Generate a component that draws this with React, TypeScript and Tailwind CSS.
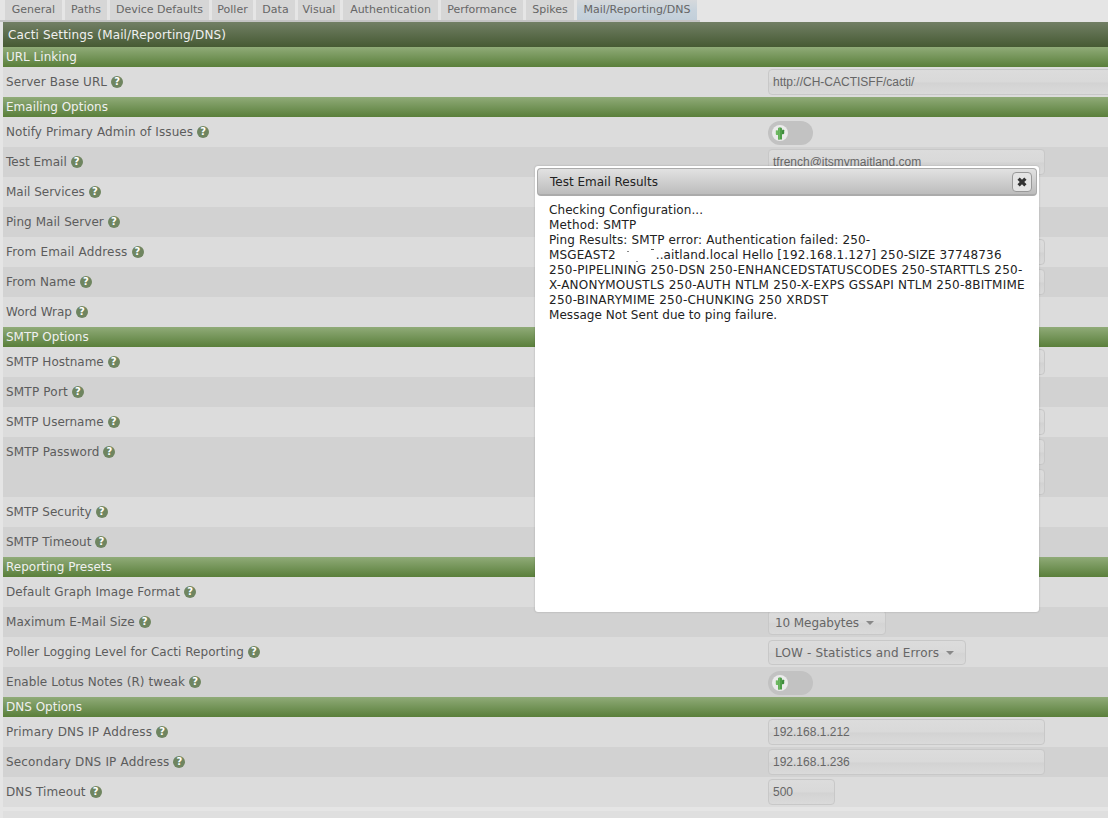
import React from "react";

const tabs = [
  { t: "General", w: "w-[57px]" },
  { t: "Paths", w: "w-[42px]" },
  { t: "Device Defaults", w: "w-[99px]" },
  { t: "Poller", w: "w-[41px]" },
  { t: "Data", w: "w-[39px]" },
  { t: "Visual", w: "w-[42px]" },
  { t: "Authentication", w: "w-[95px]" },
  { t: "Performance", w: "w-[82px]" },
  { t: "Spikes", w: "w-[48px]" },
  { t: "Mail/Reporting/DNS", w: "w-[120px]" },
];

type Ctl =
  | { k: "none" }
  | { k: "input"; v?: string; w?: string }
  | { k: "toggle" }
  | { k: "select"; v: string; w: string; tr?: string; m: string };

type Item =
  | { h: string }
  | { l: string; c: Ctl; c2?: Ctl; tall?: boolean; tr?: string };

const none: Ctl = { k: "none" };
const items: Item[] = [
  { h: "URL Linking" },
  { l: "Server Base URL", tr: "tracking-[0.07px]", c: { k: "input", v: "http://CH-CACTISFF/cacti/", w: "w-[400px]" } },
  { h: "Emailing Options" },
  { l: "Notify Primary Admin of Issues", tr: "tracking-[0.1px]", c: { k: "toggle" } },
  { l: "Test Email", c: { k: "input", v: "tfrench@itsmymaitland.com" } },
  { l: "Mail Services", c: none },
  { l: "Ping Mail Server", tr: "tracking-[0.06px]", c: none },
  { l: "From Email Address", tr: "tracking-[0.17px]", c: { k: "input" } },
  { l: "From Name", tr: "tracking-[0.1px]", c: { k: "input" } },
  { l: "Word Wrap", c: none },
  { h: "SMTP Options" },
  { l: "SMTP Hostname", c: { k: "input" } },
  { l: "SMTP Port", tr: "tracking-[0.2px]", c: none },
  { l: "SMTP Username", c: { k: "input" } },
  { l: "SMTP Password", tr: "tracking-[0.08px]", c: { k: "input" }, c2: { k: "input" }, tall: true },
  { l: "SMTP Security", c: none },
  { l: "SMTP Timeout", c: none },
  { h: "Reporting Presets" },
  { l: "Default Graph Image Format", tr: "tracking-[0.08px]", c: none },
  { l: "Maximum E-Mail Size", tr: "tracking-[0.05px]", c: { k: "select", v: "10 Megabytes", w: "w-[118px]", tr: "tracking-[-0.08px]", m: "ml-[7px]" } },
  { l: "Poller Logging Level for Cacti Reporting", tr: "tracking-[0.03px]", c: { k: "select", v: "LOW - Statistics and Errors", w: "w-[198px]", tr: "tracking-[0.15px]", m: "ml-[7px]" } },
  { l: "Enable Lotus Notes (R) tweak", tr: "tracking-[0.07px]", c: { k: "toggle" } },
  { h: "DNS Options" },
  { l: "Primary DNS IP Address", tr: "tracking-[0.18px]", c: { k: "input", v: "192.168.1.212" } },
  { l: "Secondary DNS IP Address", tr: "tracking-[0.17px]", c: { k: "input", v: "192.168.1.236" } },
  { l: "DNS Timeout", tr: "tracking-[0.09px]", c: { k: "input", v: "500", w: "w-[67px]" } },
];

function Help() {
  return (
    <span className="ml-[4px] inline-flex h-[12px] w-[12px] shrink-0 items-center justify-center rounded-full bg-[#6f8560] text-[10px] font-bold leading-none text-white">
      ?
    </span>
  );
}

function Cactus() {
  return (
    <svg width="10" height="13" viewBox="0 0 10 13" className="block">
      <path d="M3 1.2 C3 .2 7 .2 7 1.2 V12.6 H3 Z" fill="#4f9e4a" />
      <path d="M.8 3.8 C.8 3 3 3 3 3.8 V8 H1.8 C1.1 8 .8 7.5 .8 7 Z" fill="#6fb862" />
      <path d="M7 3.2 C7 2.6 9.2 2.6 9.2 3.2 V6 C9.2 6.7 8.8 7.2 8.2 7.2 H7 Z" fill="#3f8c3c" />
      <path d="M3.4 1 H4.8 V12.6 H3.4 Z" fill="#74bd66" />
    </svg>
  );
}

function Control({ c }: { c: Ctl }) {
  if (c.k === "none") return null;
  if (c.k === "toggle")
    return (
      <div className="mt-[2px] flex h-[24px] w-[45px] items-center rounded-full bg-[#c2c2c2] pl-[4px]">
        <div className="flex h-[16px] w-[16px] items-center justify-center rounded-full bg-[#ebebeb]">
          <Cactus />
        </div>
      </div>
    );
  if (c.k === "select")
    return (
      <div className={`mt-[1px] flex h-[25px] ${c.w} items-center rounded-[4px] border border-[#c8c8c8] bg-[linear-gradient(#dcdcdc_0%,#d9d9d9_48%,#d4d4d4_55%,#dadada_100%)] pl-[6px] text-[12px] text-[#666]`}>
        <span className={`whitespace-nowrap ${c.tr ?? ""}`}>{c.v}</span>
        <span className={`${c.m} h-0 w-0 border-x-[4px] border-t-[4px] border-x-transparent border-t-[#888]`} />
      </div>
    );
  return (
    <div className={`flex h-[26px] ${c.w ?? "w-[277px]"} shrink-0 items-center rounded-[4px] border border-[#c8c8c8] bg-[linear-gradient(#dcdcdc_0%,#d9d9d9_48%,#d3d3d3_55%,#dadada_100%)] pl-[4px] font-['Liberation_Sans',sans-serif] text-[12px] text-[#666]`}>
      {c.v}
    </div>
  );
}

export default function App() {
  let n = 0;
  return (
    <div className="relative flex h-[818px] w-[1108px] flex-col overflow-hidden bg-[#e5e5e5] font-['DejaVu_Sans',Verdana,sans-serif] text-[12px]">
      <div className="flex h-[22px] w-[700px] shrink-0 gap-[3px] border-b-2 border-[#c4c4c4] pl-[5px]">
        {tabs.map(({ t, w }, i) => (
          <div
            key={t}
            className={`flex h-[20px] ${w} items-center justify-center whitespace-nowrap text-[11px] text-[#666] ${
              i === 9
                ? "bg-[linear-gradient(#d6d9dc_0%,#c8d3dc_50%,#c2cfda_100%)]"
                : "bg-[#d6d6d6]"
            }`}
          >
            {t}
          </div>
        ))}
      </div>
      <div className="ml-[3px] shrink-0">
        <div className="flex h-[25px] items-center bg-linear-to-b from-[#727f65] to-[#465a33] pl-[5px] text-[12px] tracking-[0.14px] text-[#f0f0f0]">
          Cacti Settings (Mail/Reporting/DNS)
        </div>
        {items.map((it) => {
          if ("h" in it) {
            n = 0;
            return (
              <div key={it.h} className="flex h-[20px] items-center bg-linear-to-b from-[#90ab78] to-[#5a7f3a] pl-[3px] text-[12px] text-[#f0f0f0]">
                {it.h}
              </div>
            );
          }
          n++;
          const bg = n % 2 === 1 ? "bg-[#dcdcdc]" : "bg-[#d2d2d2]";
          return (
            <div key={it.l} className={`flex ${it.tall ? "h-[60px]" : "h-[30px]"} ${bg}`}>
              <div className="flex h-[30px] w-[765px] shrink-0 items-center pl-[3px] text-[#5c5c5c]">
                <span className={`whitespace-nowrap ${it.tr ?? ""}`}>{it.l}</span>
                <Help />
              </div>
              <div className="flex flex-col justify-start gap-[4px] py-[2px]">
                <div className="flex h-[26px] items-start"><Control c={it.c} /></div>
                {it.c2 && <Control c={it.c2} />}
              </div>
            </div>
          );
        })}
      </div>
      <div className="mt-[4px] ml-[3px] flex-1 bg-[#dfdfdf]" />
      <div className="absolute left-[535px] top-[166px] h-[446px] w-[504px] rounded-[3px] bg-white shadow-[0_0_2px_rgba(0,0,0,0.25)]">
        <div className="mx-[2px] mt-[2px] flex h-[28px] items-center justify-between rounded-[4px] border border-b-2 border-[#ababab] bg-linear-to-b from-[#e2e2e2] to-[#bcbcbc] pl-[12px] pr-[4px] text-[12px] text-[#222]">
          <span>Test Email Results</span>
          <span className="flex h-[20px] w-[20px] items-center justify-center rounded-[4px] border border-[#999] bg-[#e4e4e4]">
            <svg width="12" height="12" viewBox="0 0 12 12">
              <path d="M2.6 2.6 L9.4 9.4 M9.4 2.6 L2.6 9.4" stroke="#333" strokeWidth="3.2" />
            </svg>
          </span>
        </div>
        <div className="whitespace-nowrap pl-[14px] pt-[7px] text-[12px] leading-[15px] text-[#222]">
          <div className="tracking-[0.08px]">Checking Configuration...</div>
          <div className="tracking-[0.16px]">Method: SMTP</div>
          <div className="tracking-[0.14px]">Ping Results: SMTP error: Authentication failed: 250-</div>
          <div className="flex tracking-[0.13px]">
            <span>MSGEAST2</span>
            <span className="relative inline-block w-[40px]">
              <span className="absolute left-[11px] top-[3px] h-[1px] w-[2px] bg-[#888]" />
              <span className="absolute left-[20px] top-[13px] h-[1px] w-[2px] bg-[#888]" />
              <span className="absolute left-[35px] top-[1px] h-[1px] w-[3px] bg-[#555]" />
            </span>
            <span>..aitland.local Hello [192.168.1.127] 250-SIZE 37748736</span>
          </div>
          <div className="tracking-[0.25px]">250-PIPELINING 250-DSN 250-ENHANCEDSTATUSCODES 250-STARTTLS 250-</div>
          <div className="tracking-[0.23px]">X-ANONYMOUSTLS 250-AUTH NTLM 250-X-EXPS GSSAPI NTLM 250-8BITMIME</div>
          <div className="tracking-[0.26px]">250-BINARYMIME 250-CHUNKING 250 XRDST</div>
          <div className="tracking-[0.05px]">Message Not Sent due to ping failure.</div>
        </div>
      </div>
    </div>
  );
}
